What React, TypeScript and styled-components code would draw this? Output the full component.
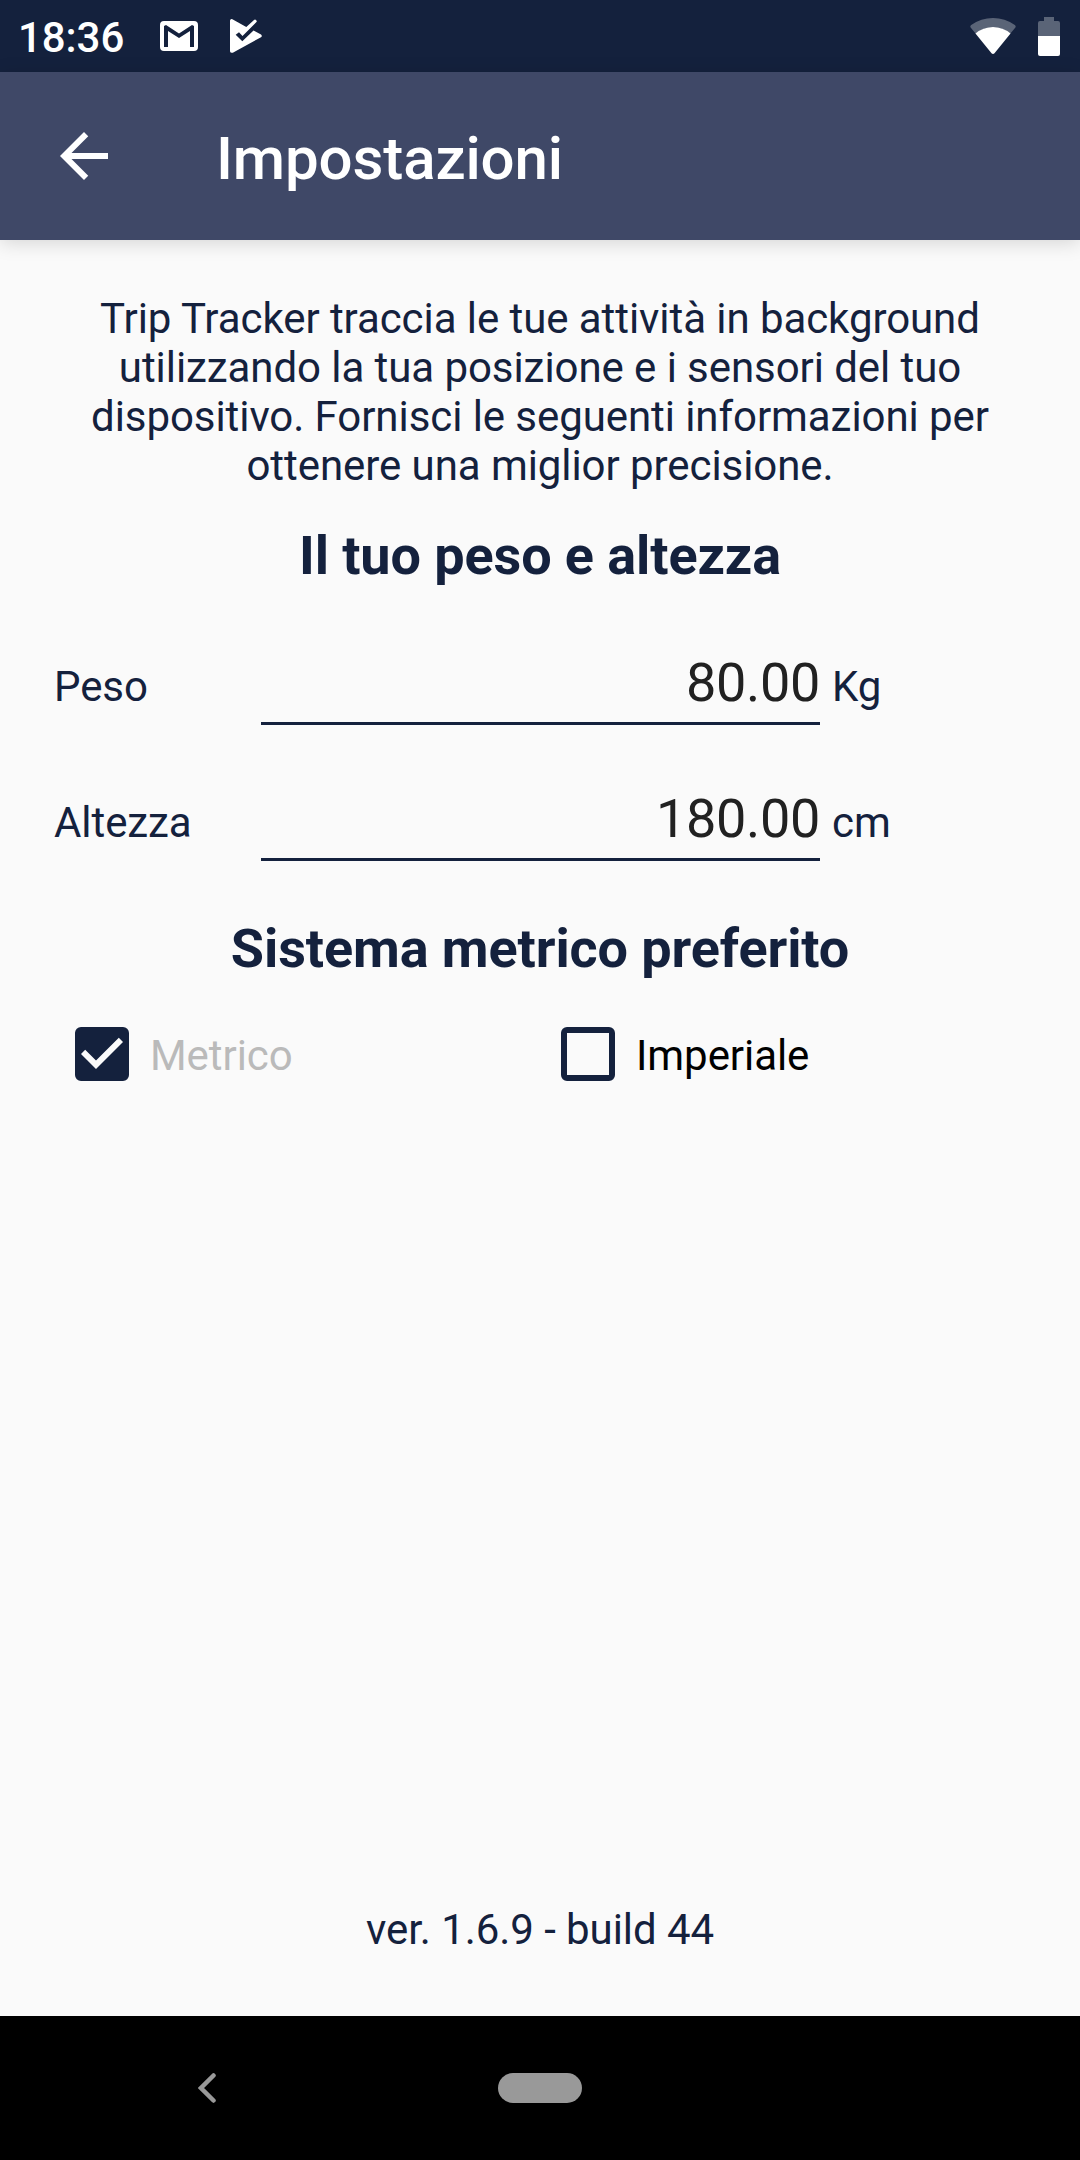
import React, { useState } from "react";
import styled, { createGlobalStyle } from "styled-components";

const navy = "#14213d";

const GlobalStyle = createGlobalStyle`
  html, body { margin: 0; padding: 0; background: #fafafa; }
  *, *::before, *::after { box-sizing: border-box; }
`;

const Screen = styled.div`
  display: flex;
  flex-direction: column;
  width: 1080px;
  height: 2160px;
  background: #fafafa;
  color: ${navy};
  font-family: Roboto, "Liberation Sans", sans-serif;
  font-size: 42px;
  line-height: 49px;
  letter-spacing: -0.07px;
  overflow: hidden;
`;

const StatusBar = styled.header`
  display: flex;
  align-items: center;
  flex: none;
  height: 72px;
  padding: 0 20px 0 18px;
  background: ${navy};
  color: #fff;
`;

const Clock = styled.span`
  width: 142px;
  padding-top: 3px;
  font-size: 42px;
  font-weight: 500;
`;

const StatusIcon = styled.svg<{ $gap?: number }>`
  display: block;
  flex: none;
  margin-left: ${({ $gap = 0 }) => $gap}px;
  fill: #fff;
`;

const Spacer = styled.div`
  flex: 1;
`;

const AppBar = styled.nav`
  display: flex;
  align-items: center;
  flex: none;
  height: 168px;
  padding-left: 48px;
  background: #3f4867;
  color: #fff;
  box-shadow: 0 3px 18px rgba(0, 0, 0, 0.15);
`;

const BackButton = styled.button`
  display: block;
  width: 72px;
  height: 72px;
  margin: 0 96px 0 0;
  padding: 0;
  border: 0;
  background: none;

  svg {
    display: block;
    fill: #fff;
  }
`;

const Title = styled.h1`
  margin: 0;
  padding-top: 5px;
  font-size: 60px;
  font-weight: 500;
  line-height: 70px;
  letter-spacing: -0.12px;
`;

const Content = styled.main`
  display: flex;
  flex-direction: column;
  flex: 1;
  padding: 54px 54px 62px;
`;

const Intro = styled.p`
  margin: 0;
  text-align: center;
`;

const SectionTitle = styled.h2<{ $top: number; $bottom: number }>`
  margin: ${({ $top, $bottom }) => `${$top}px 0 ${$bottom}px`};
  font-size: 54px;
  font-weight: 700;
  line-height: 63px;
  letter-spacing: -0.1px;
  text-align: center;
`;

const Fields = styled.div`
  display: flex;
  flex-direction: column;
  gap: 62px;
`;

const Field = styled.label`
  display: grid;
  grid-template-columns: 207px 559px auto;
  align-items: baseline;
  height: 74px;
`;

const Value = styled.input`
  width: 100%;
  height: 74px;
  padding: 0 0 8px;
  border: 0;
  border-bottom: 3px solid ${navy};
  border-radius: 0;
  outline: 0;
  background: none;
  color: #212121;
  font: 400 54px/63px Roboto, "Liberation Sans", sans-serif;
  letter-spacing: -0.35px;
  text-align: right;
`;

const Unit = styled.span`
  padding-left: 12px;
`;

const Options = styled.div`
  display: grid;
  grid-template-columns: 486px 1fr;
  padding-left: 21px;
`;

const Option = styled.label<{ $muted: boolean }>`
  display: flex;
  align-items: center;
  gap: 21px;
  height: 54px;
  color: ${({ $muted }) => ($muted ? "#bababa" : "#000")};
`;

const OptionText = styled.span`
  padding-top: 3px;
`;

const Box = styled.button<{ $checked: boolean }>`
  width: 54px;
  height: 54px;
  padding: 0;
  border: 6px solid ${navy};
  border-radius: 6px;
  background: ${({ $checked }) => ($checked ? navy : "transparent")};

  svg {
    display: block;
    fill: #fafafa;
  }
`;

const Version = styled.footer`
  margin-top: auto;
  text-align: center;
`;

const SystemNav = styled.div`
  display: grid;
  grid-template-columns: 498px 84px 498px;
  align-items: center;
  flex: none;
  height: 144px;
  background: #000;
`;

const NavBack = styled.svg`
  display: block;
  margin-left: 198px;
  fill: none;
  stroke: #999;
  stroke-width: 4.5;
  stroke-linejoin: miter;
  stroke-linecap: round;
`;

const HomePill = styled.div`
  height: 30px;
  border-radius: 15px;
  background: #999;
`;

type System = "Metrico" | "Imperiale";

const fields = [
  { label: "Peso", value: "80.00", unit: "Kg" },
  { label: "Altezza", value: "180.00", unit: "cm" },
];

export default function App() {
  const [system, setSystem] = useState<System>("Metrico");
  const systems: System[] = ["Metrico", "Imperiale"];

  return (
    <>
      <GlobalStyle />
      <Screen>
        <StatusBar>
          <Clock>18:36</Clock>
          <StatusIcon width="38" height="30" viewBox="0 0 38 30">
            <path
              fillRule="evenodd"
              d="M4 0H34Q38 0 38 4V26Q38 30 34 30H4Q0 30 0 26V4Q0 0 4 0ZM4 5V26H8V10L19 17L30 10V26H34V5L32 4L19 12.5L6 4Z"
            />
          </StatusIcon>
          <StatusIcon $gap={32} width="32" height="34" viewBox="0 0 32 34">
            <path d="M0 1.6Q0.3-0.5 2.4 0.2L16.3 8L24 0.9Q25 0 26 0.9T26.7 2.8L12.5 17L9 13.2L5.7 15.7L12.3 22.3L23.5 11.4L31 15.6Q32.6 17 31 18.2L2.8 33.7Q0.4 34.4 0 32.2Z" />
          </StatusIcon>
          <Spacer />
          <StatusIcon width="46" height="37" viewBox="0 0 46 37">
            <path
              fillOpacity="0.3"
              d="M0.6 9.4Q-0.2 8 1.2 7Q11 0 23 0T44.8 7Q46.2 8 45.4 9.4L40 16Q32 9 23 9T6 16Z"
            />
            <path d="M5.5 15.5Q13 9 23 9T40.5 15.5L24.5 35.2Q23 36.8 21.5 35.2Z" />
          </StatusIcon>
          <StatusIcon $gap={22} width="22" height="39" viewBox="0 0 22 39">
            <path fillOpacity="0.3" d="M6 0H16V4H20Q22 4 22 6V19H0V6Q0 4 2 4H6Z" />
            <path d="M0 19H22V37Q22 39 20 39H2Q0 39 0 37Z" />
          </StatusIcon>
        </StatusBar>

        <AppBar>
          <BackButton type="button" aria-label="Indietro">
            <svg width="72" height="72" viewBox="0 0 24 24">
              <path d="M20 11H7.83l5.59-5.59L12 4l-8 8 8 8 1.41-1.41L7.83 13H20v-2z" />
            </svg>
          </BackButton>
          <Title>Impostazioni</Title>
        </AppBar>

        <Content>
          <Intro>
            Trip Tracker traccia le tue attività in background utilizzando la tua posizione e i
            sensori del tuo dispositivo. Fornisci le seguenti informazioni per ottenere una miglior
            precisione.
          </Intro>

          <SectionTitle $top={34} $bottom={64}>
            Il tuo peso e altezza
          </SectionTitle>
          <Fields>
            {fields.map(({ label, value, unit }) => (
              <Field key={label}>
                <span>{label}</span>
                <Value defaultValue={value} inputMode="decimal" />
                <Unit>{unit}</Unit>
              </Field>
            ))}
          </Fields>

          <SectionTitle $top={56} $bottom={47}>
            Sistema metrico preferito
          </SectionTitle>
          <Options>
            {systems.map((name) => {
              const checked = system === name;
              return (
                <Option key={name} $muted={checked}>
                  <Box
                    type="button"
                    role="checkbox"
                    aria-checked={checked}
                    aria-label={name}
                    $checked={checked}
                    onClick={() => setSystem(name)}
                  >
                    {checked && (
                      <svg width="42" height="42" viewBox="0 0 42 42">
                        <path d="M15 36L0 21L4.2 16.8L15 27.6L37.8 4.8L42 9Z" />
                      </svg>
                    )}
                  </Box>
                  <OptionText>{name}</OptionText>
                </Option>
              );
            })}
          </Options>

          <Version>ver. 1.6.9 - build 44</Version>
        </Content>

        <SystemNav>
          <NavBack width="18" height="30" viewBox="0 0 18 30">
            <path d="M15.5 2.5L3 15L15.5 27.5" />
          </NavBack>
          <HomePill />
        </SystemNav>
      </Screen>
    </>
  );
}
